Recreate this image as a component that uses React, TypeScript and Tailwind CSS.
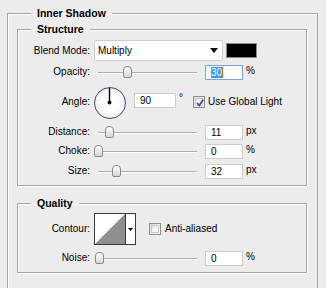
import React from "react";

function Label({ children }: { children: React.ReactNode }) {
  return <div className="w-[72px] mr-[4px] text-right leading-[14px] shrink-0">{children}</div>;
}

function Slider({ pos }: { pos: number }) {
  return (
    <div className="relative w-[106px] h-[16px] shrink-0">
      <div className="absolute left-[4px] w-[99px] top-[8px] h-[2px] border-t border-[#aeaeae] bg-white" />
      <div
        className="absolute top-[2px] w-[9px] h-[12px] border border-[#8a8a8a] rounded-t-[4px] rounded-b-[2px] bg-gradient-to-b from-white to-[#d6d6d6]"
        style={{ left: pos }}
      />
    </div>
  );
}

function Input({ value, w = 38 }: { value: string; w?: number }) {
  return (
    <div
      className="h-[15px] bg-white border border-[#cdcdcd] pl-[5px] flex items-center leading-[13px] shrink-0"
      style={{ width: w }}
    >
      {value}
    </div>
  );
}

function SliderRow({
  label,
  pos,
  value,
  unit,
  className,
}: {
  label: string;
  pos: number;
  value: string;
  unit: string;
  className: string;
}) {
  return (
    <div className={"flex items-center h-[16px] " + className}>
      <Label>{label}</Label>
      <Slider pos={pos} />
      <div className="ml-[5px]">
        <Input value={value} />
      </div>
      <div className="ml-[3px] leading-[14px] -mt-[2px]">{unit}</div>
    </div>
  );
}

function Check({ checked }: { checked: boolean }) {
  return (
    <div className="w-[12px] h-[12px] border border-[#8e8f8f] bg-gradient-to-br from-[#dcdcdc] to-[#fbfbfb] p-[1px] shrink-0">
      <div className="w-full h-full border border-[#c8c8c8] bg-gradient-to-br from-[#e4e4e4] to-white relative">
        {checked && (
          <svg width="10" height="10" viewBox="0 0 10 10" className="absolute -left-[1px] -top-[1px]">
            <path d="M2.2 5 L4.2 7.6 L8.3 1.6" stroke="#3b4f8f" strokeWidth="1.7" fill="none" />
          </svg>
        )}
      </div>
    </div>
  );
}

export default function App() {
  return (
    <div className="w-[326px] h-[288px] bg-[#ececec] overflow-hidden pl-[7px] pt-[6px] font-['Liberation_Sans',Arial,sans-serif] text-[10px] text-black">
      <fieldset className="w-[311px] h-[400px] border border-[#a6a6a6] pl-[9px] shadow-[inset_1px_1px_0_#fff]">
        <legend className="ml-[14px] px-[6px] font-bold text-[10.5px] leading-[14px]">Inner Shadow</legend>

        <fieldset className="mt-[2px] w-[290px] border border-[#a6a6a6] pb-[6px] shadow-[inset_1px_1px_0_#fff,1px_1px_0_#fff]">
          <legend className="ml-[13px] px-[6px] font-bold text-[10.5px] leading-[14px]">Structure</legend>

          {/* Blend mode */}
          <div className="flex items-center h-[21px] mt-[4px]">
            <Label>Blend Mode:</Label>
            <div className="w-[129px] h-[21px] bg-white border border-[#cfcfcf] rounded-[2px] flex items-center pl-[3px] pr-[4px] justify-between shrink-0">
              <span className="leading-[14px]">Multiply</span>
              <svg width="8" height="5" viewBox="0 0 8 5">
                <polygon points="0,0 8,0 4,5" fill="#000" />
              </svg>
            </div>
            <div className="ml-[3px] w-[31px] h-[15px] bg-black border border-[#8a8a8a] shrink-0" />
          </div>

          {/* Opacity */}
          <div className="flex items-center h-[16px] mt-[3px]">
            <Label>Opacity:</Label>
            <Slider pos={29} />
            <div className="ml-[5px] w-[38px] h-[15px] bg-white border border-[#7ba6d8] pl-[5px] flex items-center shrink-0">
              <span className="bg-[#3399ff] text-white leading-[11px] h-[11px]">30</span>
              <span className="w-[1px] h-[11px] bg-[#cc6600]" />
            </div>
            <div className="ml-[3px] leading-[14px] -mt-[2px]">%</div>
          </div>

          {/* Angle */}
          <div className="flex items-start h-[32px] mt-[7px]">
            <div className="w-[72px] mr-[4px] text-right leading-[14px] shrink-0 mt-[8px]">Angle:</div>
            <div className="w-[32px] h-[32px] rounded-full border-[1.5px] border-[#3b4a7a] bg-radial from-white from-40% to-[#e0e0e0] shrink-0 relative">
              <svg width="29" height="29" viewBox="0 0 29 29" className="absolute left-0 top-0">
                <line x1="14.5" y1="14.5" x2="14.5" y2="0" stroke="#000" strokeWidth="1.4" />
                <circle cx="14.5" cy="14.5" r="1.9" fill="#000" />
              </svg>
            </div>
            <div className="ml-[8px] mt-[6px]">
              <Input value="90" w={42} />
            </div>
            <div className="ml-[3px] mt-[4px] leading-[14px]">°</div>
            <div className="ml-[10px] mt-[9px]">
              <Check checked />
            </div>
            <div className="ml-[3px] mt-[8px] leading-[14px]">Use Global Light</div>
          </div>

          <SliderRow label="Distance:" pos={11} value="11" unit="px" className="mt-[5px]" />
          <SliderRow label="Choke:" pos={0} value="0" unit="%" className="mt-[3px]" />
          <SliderRow label="Size:" pos={18} value="32" unit="px" className="mt-[4px]" />
        </fieldset>

        <fieldset className="mt-[10px] w-[290px] border border-[#a6a6a6] pb-[6px] shadow-[inset_1px_1px_0_#fff,1px_1px_0_#fff]">
          <legend className="ml-[13px] px-[6px] font-bold text-[10.5px] leading-[14px]">Quality</legend>

          {/* Contour */}
          <div className="flex items-center h-[32px] mt-[3px]">
            <Label>Contour:</Label>
            <div className="w-[42px] h-[32px] border border-[#3a3a3a] bg-white flex shrink-0">
              <svg width="30" height="30" viewBox="0 0 30 30" className="shrink-0">
                <polygon points="0,30 30,0 30,30" fill="#8e8e8e" />
              </svg>
              <div className="w-[10px] border-l border-[#3a3a3a] flex items-center justify-center">
                <svg width="5" height="3" viewBox="0 0 5 3">
                  <polygon points="0,0 5,0 2.5,3" fill="#000" />
                </svg>
              </div>
            </div>
            <div className="ml-[13px]">
              <Check checked={false} />
            </div>
            <div className="ml-[4px] leading-[14px]">Anti-aliased</div>
          </div>

          <SliderRow label="Noise:" pos={1} value="0" unit="%" className="mt-[5px]" />
        </fieldset>
      </fieldset>
    </div>
  );
}
